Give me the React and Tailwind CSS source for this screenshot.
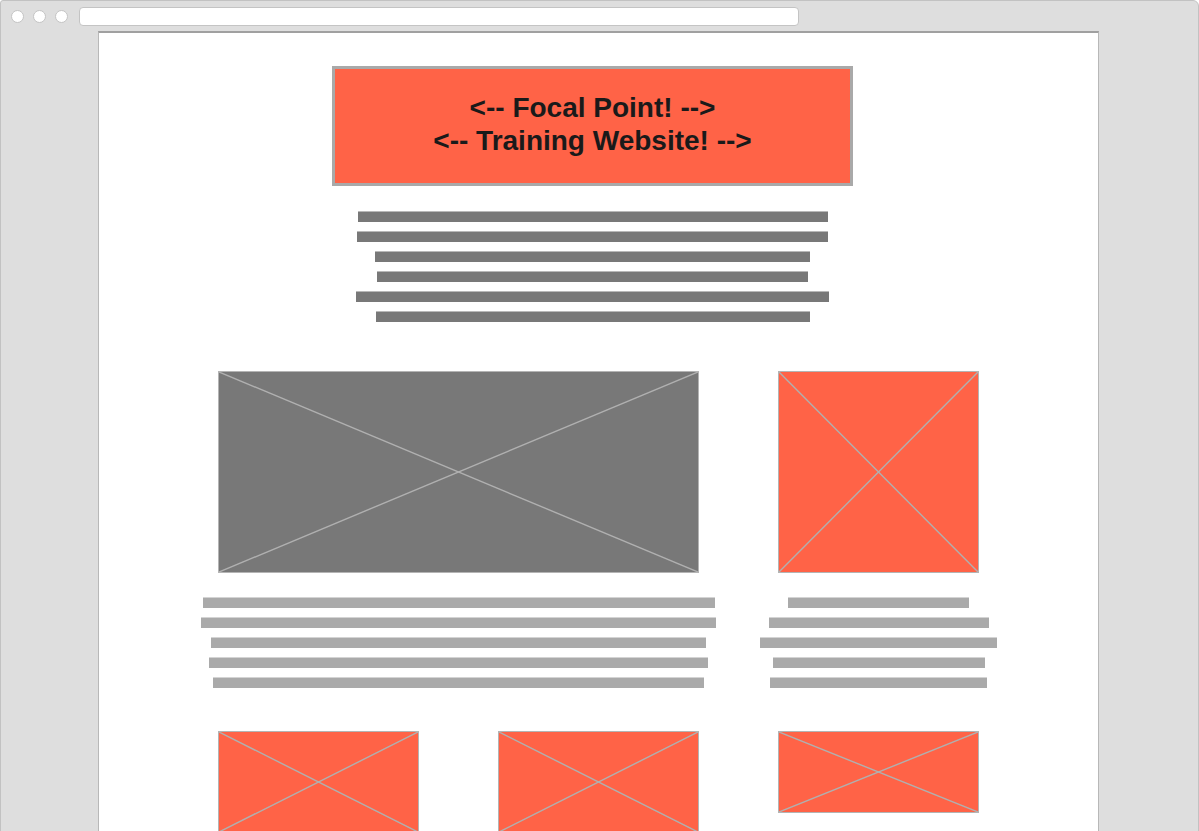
const darkBars = [
  { ml: 'ml-[259px]', w: 'w-[470px]' },
  { ml: 'ml-[258px]', w: 'w-[471px]' },
  { ml: 'ml-[276px]', w: 'w-[435px]' },
  { ml: 'ml-[278px]', w: 'w-[431px]' },
  { ml: 'ml-[257px]', w: 'w-[473px]' },
  { ml: 'ml-[277px]', w: 'w-[434px]' },
];

const leftLines = [
  { ml: 'ml-[104px]', w: 'w-[512px]' },
  { ml: 'ml-[102px]', w: 'w-[515px]' },
  { ml: 'ml-[112px]', w: 'w-[495px]' },
  { ml: 'ml-[110px]', w: 'w-[499px]' },
  { ml: 'ml-[114px]', w: 'w-[491px]' },
];

const rightLines = [
  { ml: 'ml-[28px]', w: 'w-[181px]' },
  { ml: 'ml-[9px]', w: 'w-[220px]' },
  { ml: 'ml-[0px]', w: 'w-[237px]' },
  { ml: 'ml-[13px]', w: 'w-[212px]' },
  { ml: 'ml-[10px]', w: 'w-[217px]' },
];

// placeholder image box with crossed diagonals
function Placeholder({ className }) {
  return (
    <div className={`relative shrink-0 border border-[#b4b4b4] ${className}`}>
      <svg className="absolute inset-0 w-full h-full" viewBox="0 0 100 100" preserveAspectRatio="none">
        <line x1="0" y1="0" x2="100" y2="100" stroke="#b0b0b0" strokeWidth="1.4" vectorEffect="non-scaling-stroke" />
        <line x1="100" y1="0" x2="0" y2="100" stroke="#b0b0b0" strokeWidth="1.4" vectorEffect="non-scaling-stroke" />
      </svg>
    </div>
  );
}

export default function App() {
  return (
    <div className="w-[1199px] h-[831px] overflow-hidden bg-white font-['Liberation_Sans',Arial,sans-serif]">
      <div className="h-[840px] border border-[#c2c2c2] rounded-tr-[6px] rounded-tl-[3px] bg-[#dedede] flex flex-col">

        {/* Browser chrome */}
        <div className="h-[30px] shrink-0 flex items-center pl-[10px]">
          <div className="flex gap-[9px]">
            <span className="w-[13px] h-[13px] rounded-full bg-white border border-[#c4c4c4]" />
            <span className="w-[13px] h-[13px] rounded-full bg-white border border-[#c4c4c4]" />
            <span className="w-[13px] h-[13px] rounded-full bg-white border border-[#c4c4c4]" />
          </div>
          <div className="ml-[11px] w-[720px] h-[19px] rounded-[4px] bg-white border border-[#c4c4c4]" />
        </div>

        <div className="flex-1 flex">
          <div className="w-[97px] shrink-0" />

          {/* Page */}
          <div className="w-[1001px] shrink-0 bg-white border-x border-x-[#b8b8b8] border-t-2 border-t-[#a0a0a0] flex flex-col">

            {/* Focal point */}
            <div className="mt-[33px] ml-[233px] w-[521px] h-[120px] bg-[#ff6347] border-[3px] border-[#a9a9a9] flex flex-col items-center justify-center text-[28px] leading-[33px] font-bold text-[#1a1a1a] pb-[4px]">
              <p>&lt;-- Focal Point! --&gt;</p>
              <p>&lt;-- Training Website! --&gt;</p>
            </div>

            {/* Heading copy bars */}
            <div className="mt-[25px] flex flex-col gap-[9px]">
              {darkBars.map((b, i) => (
                <div key={i} className={`h-[11px] bg-[#787878] border-t border-t-[#b8b8b8] ${b.ml} ${b.w}`} />
              ))}
            </div>

            {/* Feature row */}
            <div className="mt-[49px] flex">
              <Placeholder className="ml-[119px] w-[481px] h-[202px] bg-[#787878]" />
              <Placeholder className="ml-[79px] w-[201px] h-[202px] bg-[#ff6347]" />
            </div>

            {/* Feature copy */}
            <div className="mt-[24px] flex">
              <div className="w-[661px] shrink-0 flex flex-col gap-[9px]">
                {leftLines.map((b, i) => (
                  <div key={i} className={`h-[11px] bg-[#aaaaaa] border-t border-t-[#d4d4d4] ${b.ml} ${b.w}`} />
                ))}
              </div>
              <div className="flex flex-col gap-[9px]">
                {rightLines.map((b, i) => (
                  <div key={i} className={`h-[11px] bg-[#aaaaaa] border-t border-t-[#d4d4d4] ${b.ml} ${b.w}`} />
                ))}
              </div>
            </div>

            {/* Bottom thumbnails */}
            <div className="mt-[43px] flex items-start">
              <Placeholder className="ml-[119px] w-[201px] h-[102px] bg-[#ff6347]" />
              <Placeholder className="ml-[79px] w-[201px] h-[102px] bg-[#ff6347]" />
              <Placeholder className="ml-[79px] w-[201px] h-[82px] bg-[#ff6347]" />
            </div>
          </div>

          <div className="flex-1" />
        </div>
      </div>
    </div>
  );
}
